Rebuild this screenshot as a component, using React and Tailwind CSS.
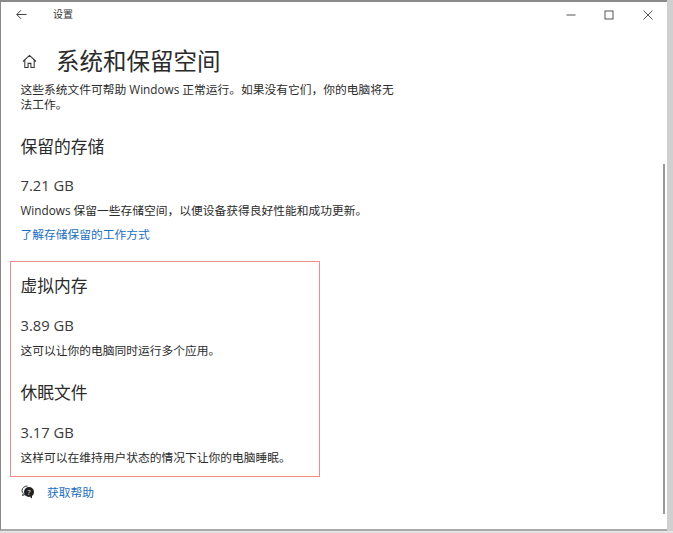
import React from "react";

const font = { fontFamily: '"Open Sans", "Noto Sans CJK SC", sans-serif' };

function Section({ title, size, desc, children, gapClass }) {
  return (
    <div className="flex flex-col">
      <div className="text-[16.75px] leading-[24px] text-[#2b2b2b]">{title}</div>
      <div className={`${gapClass} text-[14.75px] leading-[20px] text-[#3a3a3a]`}>{size}</div>
      <div className="mt-[5px] whitespace-nowrap text-[11.75px] leading-[20px] text-[#2b2b2b]">{desc}</div>
      {children}
    </div>
  );
}

export default function App() {
  return (
    <div style={font} className="relative flex h-[533px] w-[673px] bg-[#e4e4e4]">
      <div className="flex h-[531px] w-[667px] flex-col border-t-2 border-l border-b-2 border-t-[#8a8a8a] border-l-[#8a8a8a] border-b-[#aaa] bg-white">
        <div className="flex h-[25px] shrink-0 items-center text-[#333]">
          <svg className="ml-[15px] h-[11px] w-[11px]" viewBox="0 0 11 11" fill="none" stroke="#444" strokeWidth="1">
            <path d="M10.5 5.5H.8M5 1.2L.8 5.5 5 9.8" />
          </svg>
          <span className="ml-[26px] text-[10px]">设置</span>
          <div className="ml-auto flex items-center">
            <svg className="h-[10px] w-[10px]" viewBox="0 0 10 10" stroke="#555" fill="none"><path d="M.5 5h9" /></svg>
            <svg className="ml-[28px] h-[10px] w-[10px]" viewBox="0 0 10 10" stroke="#555" fill="none"><rect x="1" y="1" width="8" height="8" /></svg>
            <svg className="ml-[29px] mr-[14px] h-[10px] w-[10px]" viewBox="0 0 10 10" stroke="#555" fill="none"><path d="M.5.5l9 9M9.5.5l-9 9" /></svg>
          </div>
        </div>

        <div className="flex min-h-0 flex-1 flex-col pl-[19.5px]">
          <div className="mt-[14px] flex h-[40px] items-center">
            <svg className="ml-[1.5px] h-[15px] w-[15px]" viewBox="0 0 16 16" fill="none" stroke="#333" strokeWidth="1.1">
              <path d="M1 8l7-6.5L15 8M3 6.5V14.5h3.5V10h3v4.5H13V6.5" />
            </svg>
            <h1 className="ml-[19px] whitespace-nowrap text-[23.5px] leading-[40px] font-normal text-[#2b2b2b]">系统和保留空间</h1>
          </div>
          <p className="mt-[1px] w-[376px] text-[11.75px] leading-[15px] text-[#2b2b2b]">
            {"这些系统文件可帮助 Windows 正常运行。如果没有它们\uFF0C你的电脑将无法工作。"}
          </p>
          <div className="mt-[23px] w-[360px]">
            <Section title="保留的存储" size="7.21 GB" gapClass="mt-[16px]" desc={"Windows 保留一些存储空间\uFF0C以便设备获得良好性能和成功更新。"}>
              <a className="mt-[4px] text-[11.75px] leading-[20px] text-[#1a6fc0]">了解存储保留的工作方式</a>
            </Section>
          </div>
          <div className="-ml-[10.5px] mt-[17px] h-[216px] w-[310px] shrink-0 border border-[#ef8d8d] pl-[9.5px] pt-[12px]">
            <Section title="虚拟内存" size="3.89 GB" gapClass="mt-[17px]" desc="这可以让你的电脑同时运行多个应用。" />
            <div className="mt-[21px]">
              <Section title="休眠文件" size="3.17 GB" gapClass="mt-[17px]" desc="这样可以在维持用户状态的情况下让你的电脑睡眠。" />
            </div>
          </div>
          <div className="mt-[5px] flex items-center">
            <svg className="ml-[0.5px] h-[14px] w-[14px]" viewBox="0 0 14 14">
              <path d="M6.5 1C3.5 1 1 3 1 5.5c0 1.2.5 2.2 1.3 3L1.5 10.5l2.5-1" fill="none" stroke="#333" />
              <circle cx="8" cy="7" r="5" fill="#222" />
              <path d="M9 12l2 1.5V10z" fill="#222" />
              <text x="8" y="9.5" fontSize="7" fill="#fff" textAnchor="middle">?</text>
            </svg>
            <a className="ml-[12px] text-[11.75px] leading-[20px] text-[#1a6fc0]">获取帮助</a>
          </div>
        </div>
      </div>
      <div className="absolute right-[8px] top-[164px] h-[350px] w-[2px] bg-[#999]" />
      <div className="h-[531px] w-[6px] bg-[#d0d0d0]" />
    </div>
  );
}
